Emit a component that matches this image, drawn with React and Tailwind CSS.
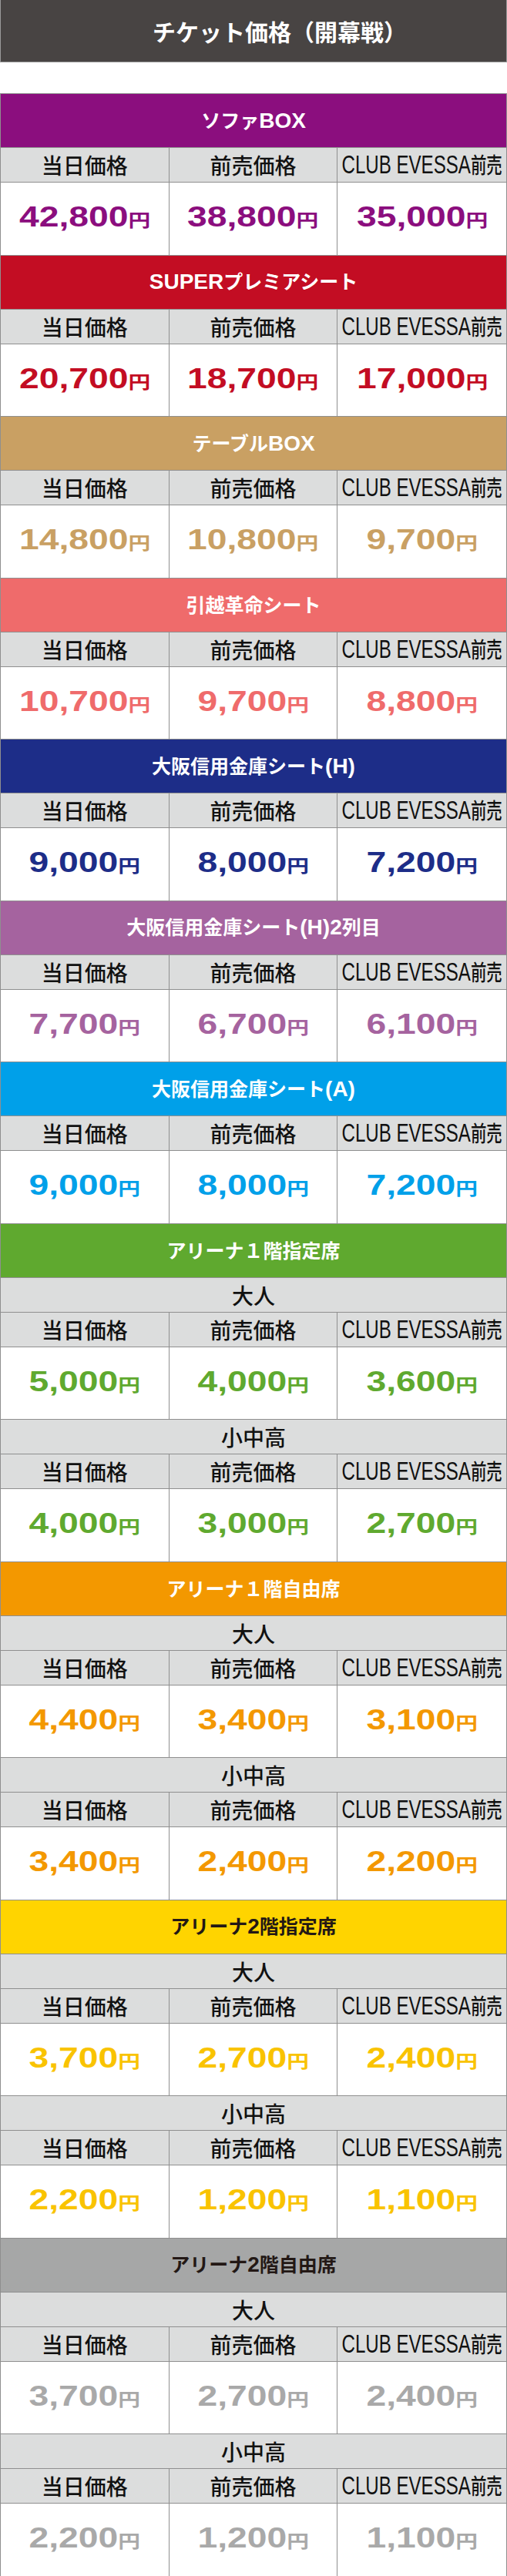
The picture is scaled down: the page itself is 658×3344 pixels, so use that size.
const sections = [
  {
    name: "ソファBOX",
    bg: "bg-[#8b0e7e]",
    color: "text-[#8b0e7e]",
    head: "text-white",
    groups: [{ label: null, prices: ["42,800", "38,800", "35,000"] }],
  },
  {
    name: "SUPERプレミアシート",
    bg: "bg-[#c30d23]",
    color: "text-[#c30d23]",
    head: "text-white",
    groups: [{ label: null, prices: ["20,700", "18,700", "17,000"] }],
  },
  {
    name: "テーブルBOX",
    bg: "bg-[#c9a063]",
    color: "text-[#c9a063]",
    head: "text-white",
    groups: [{ label: null, prices: ["14,800", "10,800", "9,700"] }],
  },
  {
    name: "引越革命シート",
    bg: "bg-[#ef6b6b]",
    color: "text-[#ef6b6b]",
    head: "text-white",
    groups: [{ label: null, prices: ["10,700", "9,700", "8,800"] }],
  },
  {
    name: "大阪信用金庫シート(H)",
    bg: "bg-[#1d2d88]",
    color: "text-[#1d2d88]",
    head: "text-white",
    groups: [{ label: null, prices: ["9,000", "8,000", "7,200"] }],
  },
  {
    name: "大阪信用金庫シート(H)2列目",
    bg: "bg-[#a5639f]",
    color: "text-[#a5639f]",
    head: "text-white",
    groups: [{ label: null, prices: ["7,700", "6,700", "6,100"] }],
  },
  {
    name: "大阪信用金庫シート(A)",
    bg: "bg-[#00a0e9]",
    color: "text-[#00a0e9]",
    head: "text-white",
    groups: [{ label: null, prices: ["9,000", "8,000", "7,200"] }],
  },
  {
    name: "アリーナ１階指定席",
    bg: "bg-[#5fa92f]",
    color: "text-[#5fa92f]",
    head: "text-white",
    groups: [
      { label: "大人", prices: ["5,000", "4,000", "3,600"] },
      { label: "小中高", prices: ["4,000", "3,000", "2,700"] },
    ],
  },
  {
    name: "アリーナ１階自由席",
    bg: "bg-[#f39800]",
    color: "text-[#f39800]",
    head: "text-white",
    groups: [
      { label: "大人", prices: ["4,400", "3,400", "3,100"] },
      { label: "小中高", prices: ["3,400", "2,400", "2,200"] },
    ],
  },
  {
    name: "アリーナ2階指定席",
    bg: "bg-[#ffd400]",
    color: "text-[#f9c300]",
    head: "text-[#231815]",
    groups: [
      { label: "大人", prices: ["3,700", "2,700", "2,400"] },
      { label: "小中高", prices: ["2,200", "1,200", "1,100"] },
    ],
  },
  {
    name: "アリーナ2階自由席",
    bg: "bg-[#a6a7a7]",
    color: "text-[#a9a9a9]",
    head: "text-[#231815]",
    groups: [
      { label: "大人", prices: ["3,700", "2,700", "2,400"] },
      { label: "小中高", prices: ["2,200", "1,200", "1,100"] },
    ],
  },
];

// latin runs in the headings are set larger, like the original artwork
function HeadText({ text }) {
  const parts = text.split(/([A-Za-z0-9()]+)/).filter(Boolean);
  return parts.map((p, i) =>
    /^[A-Za-z0-9()]+$/.test(p) ? (
      <span key={i} className="text-[28px] font-['Liberation_Sans',sans-serif]">
        {p}
      </span>
    ) : (
      <span key={i}>{p}</span>
    )
  );
}

function LabelRow() {
  return (
    <div className="grid grid-cols-3 h-[45px] bg-[#dcdddd] border-b border-[#8f8f8f] divide-x divide-[#8f8f8f] text-[#111]">
      <div className="flex items-center justify-center text-[28px] font-medium">当日価格</div>
      <div className="flex items-center justify-center text-[28px] font-medium">前売価格</div>
      <div className="flex items-center justify-center overflow-hidden">
        <span className="inline-block scale-x-[0.73] whitespace-nowrap">
          <span className="text-[33px] font-['Liberation_Sans',sans-serif]">CLUB EVESSA</span>
          <span className="text-[28px] font-medium">前売</span>
        </span>
      </div>
    </div>
  );
}

function PriceRow({ prices, color }) {
  return (
    <div className={`grid grid-cols-3 h-[94.5px] bg-white border-b border-[#8f8f8f] divide-x divide-[#8f8f8f] ${color}`}>
      {prices.map((p, i) => (
        <div key={i} className="flex items-center justify-center pb-1">
          <span className="inline-block scale-x-[1.25] whitespace-nowrap font-bold">
            <span className="text-[37px] font-['Liberation_Sans',sans-serif]">{p}</span>
            <span className="text-[23px]">円</span>
          </span>
        </div>
      ))}
    </div>
  );
}

export default function App() {
  return (
    <div className="w-[658px] bg-white font-['Noto_Sans_CJK_JP',sans-serif]">
      <div className="h-[81px] bg-[#484443] border-x border-b border-[#9a9a9a] flex items-center justify-center pl-[68px]">
        <span className="text-white text-[30px] font-bold whitespace-nowrap">チケット価格（開幕戦）</span>
      </div>
      <div className="h-[40px]"></div>
      <div className="border-t border-x border-[#8f8f8f]">
        {sections.map((s) => (
          <div key={s.name}>
            <div className={`h-[70px] flex items-center justify-center border-b border-[#8f8f8f] ${s.bg}`}>
              <span className={`text-[25px] font-bold whitespace-nowrap ${s.head}`}>
                <HeadText text={s.name} />
              </span>
            </div>
            {s.groups.map((g, i) => (
              <div key={i}>
                {g.label && (
                  <div className="h-[45px] bg-[#dcdddd] border-b border-[#8f8f8f] flex items-center justify-center text-[28px] font-medium text-[#111]">
                    {g.label}
                  </div>
                )}
                <LabelRow />
                <PriceRow prices={g.prices} color={s.color} />
              </div>
            ))}
          </div>
        ))}
      </div>
    </div>
  );
}
